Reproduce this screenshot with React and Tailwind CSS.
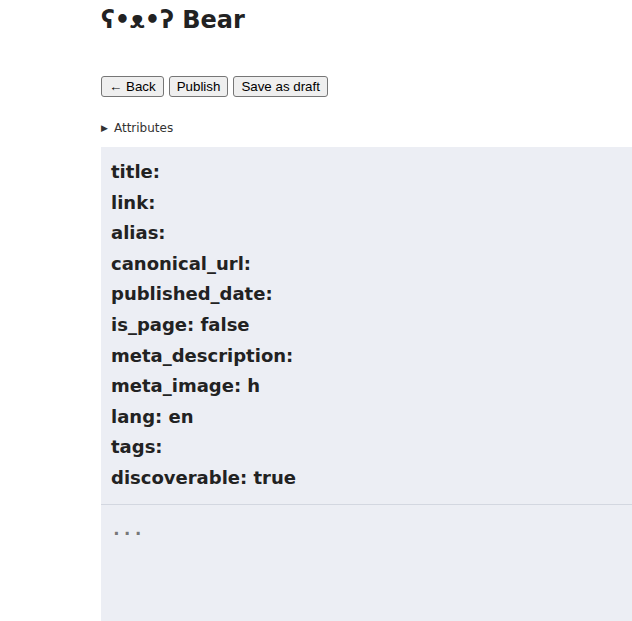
import React from 'react';

const attributes = [
    ['title', ''],
    ['link', ''],
    ['alias', ''],
    ['canonical_url', ''],
    ['published_date', ''],
    ['is_page', 'false'],
    ['meta_description', ''],
    ['meta_image', 'h'],
    ['lang', 'en'],
    ['tags', ''],
    ['discoverable', 'true'],
];

const Button = ({ children }) => (
    <button className="h-[21px] px-[7px] border border-[#767676] bg-[#efefef] rounded-[3px] text-[13.33px] leading-[19px] text-black font-['Liberation_Sans',Arial,sans-serif]">
        {children}
    </button>
);

export default function App() {
    return (
        <div className="min-h-screen bg-white pl-[101px] text-[#222] font-['DejaVu_Sans',Verdana,sans-serif] overflow-hidden">
            {/* Header */}
            <h1 className="pt-[6px] text-[24px] leading-[28px] font-bold">ʕ•ᴥ•ʔ Bear</h1>

            {/* Actions */}
            <div className="mt-[42px] flex gap-[5px]">
                <Button>← Back</Button>
                <Button>Publish</Button>
                <Button>Save as draft</Button>
            </div>

            {/* Attributes toggle */}
            <div className="mt-[23px] flex items-center gap-[6px] text-[12px] leading-[16px] text-[#333]">
                <span className="text-[9px]">▶</span>
                <span>Attributes</span>
            </div>

            {/* Editor */}
            <div className="mt-[11px] bg-[#eceef4]">
                <div className="px-[10px] py-[10px] border-b border-[#d3d7e0]">
                    {attributes.map(([key, value]) => (
                        <div key={key} className="text-[18px] leading-[30.6px] font-bold">
                            {key}:{value ? ` ${value}` : ''}
                        </div>
                    ))}
                </div>
                <div className="h-[140px] px-[10px] pt-[13px] text-[18px] leading-[22px] font-bold text-[#777] font-['DejaVu_Sans_Mono',monospace]">
                    ...
                </div>
            </div>
        </div>
    );
}
